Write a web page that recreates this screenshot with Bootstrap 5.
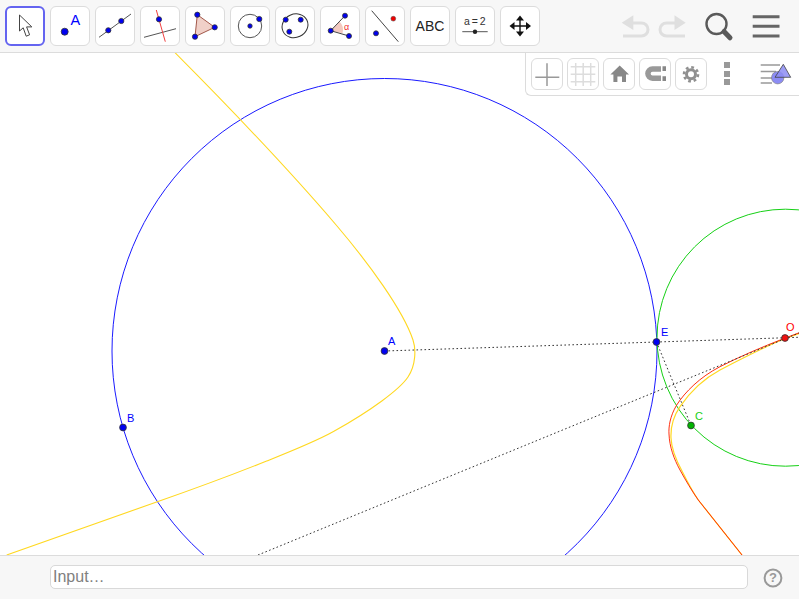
<!DOCTYPE html>
<html lang="en">
<head>
<meta charset="utf-8">
<title>Geometry</title>
<link href="https://cdn.jsdelivr.net/npm/bootstrap@5.3.0/dist/css/bootstrap.min.css" rel="stylesheet">
<style>
html,body{background:#fff;margin:0;overflow:hidden}
body{font-family:"Liberation Sans",Arial,sans-serif}
.app{width:799px;height:599px}
.topbar{height:53px;padding:6px 13px 0 5px;gap:5px;background:#f7f7f7;border-bottom:1px solid #dcdcdc;flex:none}
.tool{width:40px;height:40px;padding:0;background:#fff;border:1px solid #dcdcdc;border-radius:6px;color:#222;line-height:1;flex:none}
.tool.active{border:2px solid #6464f0}
.tool svg,.sbtn svg,.plain svg{display:block;width:100%;height:100%}
.tool.abc{font-size:14px}
.plain{padding:0;height:40px;border:0;background:none;flex:none}
.plain.w38{width:38px}
.plain.w40{width:40px}
.undo-group{margin-left:auto}
.redo-gap{margin-left:-5px}
.search-gap{margin-left:2px}
.menu-gap{margin-left:2px}
.canvas{height:502px;flex:none}
.canvas>svg{display:block}
.stylebar{top:0;right:0;width:274px;height:43px;padding:5px 0 0 5px;gap:4px;background:#fff;border:solid #dcdcdc;border-width:0 0 1px 1px;border-bottom-left-radius:6px}
.sbtn{width:32px;height:32px;padding:0;background:#fff;border:1px solid #dcdcdc;border-radius:6px;flex:none}
.dots{width:6px;height:24px;margin:4px 0 0 13px;gap:2.5px;flex:none}
.dots i{display:block;height:6px;background:#999}
.lastic{width:32px;height:32px;margin-left:26px;flex:none}
.lastic svg{display:block;width:100%;height:100%}
.inputbar{height:44px;padding:9px 0 0 50px;background:#f7f7f7;border-top:1px solid #dcdcdc;flex:none}
.inputbar .form-control{width:698px;height:24px;min-height:0;padding:0 2px;font-size:16px;line-height:22px;border:1px solid #d9d9d9;border-radius:5px;box-shadow:none;font-family:"Liberation Sans",Arial,sans-serif}
.inputbar .form-control::placeholder{color:#808080;opacity:1}
.help{width:20px;height:20px;margin:3px 0 0 15px;flex:none;display:block}
.pt{fill:#0000f0;stroke:#333;stroke-width:.8}
.lbl{font-family:"Liberation Sans",Arial,sans-serif;font-size:11px}
.dot{fill:none;stroke:#333;stroke-width:1;stroke-dasharray:1.6 2.4}
</style>
</head>
<body>
<div class="app d-flex flex-column">
  <div class="topbar d-flex align-items-start">
    <button class="tool active" type="button" aria-label="Move">
      <svg viewBox="7 8 36 36"><path d="M19.5 15V31L23.2 27.8 26.2 36.2 29.6 34.8 26.6 26.9H31.8Z" fill="#fff" stroke="#444" stroke-width="1"/></svg>
    </button>
    <button class="tool" type="button" aria-label="Point">
      <svg viewBox="51 7 38 38"><circle class="pt" cx="64.7" cy="31.7" r="3.5"/><text x="70.5" y="25.3" font-size="14.5" fill="#0000ff" font-family="Liberation Sans">A</text></svg>
    </button>
    <button class="tool" type="button" aria-label="Line">
      <svg viewBox="96 7 38 38"><path d="M99 37.3 131 14" stroke="#555" fill="none"/><circle class="pt" cx="108.3" cy="30.3" r="2.6"/><circle class="pt" cx="121.3" cy="21" r="2.6"/></svg>
    </button>
    <button class="tool" type="button" aria-label="Perpendicular">
      <svg viewBox="141 7 38 38"><path d="M144 37.3 176 28.7" stroke="#555" fill="none"/><path d="M156.3 10 165.3 41.7" stroke="#f04040" fill="none"/><circle class="pt" cx="159" cy="19.3" r="2.6"/></svg>
    </button>
    <button class="tool" type="button" aria-label="Polygon">
      <svg viewBox="186 7 38 38"><path d="M197.3 14.7 214.7 27.3 195 36.7Z" fill="#f0d0c8" stroke="#a2584a"/><circle class="pt" cx="197.3" cy="14.7" r="2.6"/><circle class="pt" cx="214.7" cy="27.3" r="2.6"/><circle class="pt" cx="195" cy="36.7" r="2.6"/></svg>
    </button>
    <button class="tool" type="button" aria-label="Circle">
      <svg viewBox="231 7 38 38"><circle cx="250" cy="26" r="11.7" fill="none" stroke="#555"/><circle class="pt" cx="250" cy="26" r="2.2"/><circle class="pt" cx="259.3" cy="19" r="2.6"/></svg>
    </button>
    <button class="tool" type="button" aria-label="Ellipse">
      <svg viewBox="276 7 38 38"><ellipse cx="295" cy="25.8" rx="13.2" ry="11.6" transform="rotate(-25 295 25.8)" fill="none" stroke="#333"/><circle class="pt" cx="285.7" cy="19.7" r="2.5"/><circle class="pt" cx="300.7" cy="19.7" r="2.5"/><circle class="pt" cx="289.3" cy="31.7" r="2.5"/></svg>
    </button>
    <button class="tool" type="button" aria-label="Angle">
      <svg viewBox="321 7 38 38"><path d="M330.7 30.7 339.5 21.6A12 12 0 0 1 342.5 33.2Z" fill="#f3c9c0" stroke="none"/><path d="M345 15.7 330.7 30.7 349 36" stroke="#444" fill="none"/><circle class="pt" cx="330.7" cy="30.7" r="2.5"/><circle class="pt" cx="345" cy="15.7" r="2.5"/><circle class="pt" cx="349" cy="36" r="2.5"/><text x="344" y="29.5" font-size="9" fill="#f03030" font-family="Liberation Sans">α</text></svg>
    </button>
    <button class="tool" type="button" aria-label="Reflect">
      <svg viewBox="366 7 38 38"><path d="M371.7 10.7 398.3 41.7" stroke="#444" fill="none"/><circle class="pt" cx="376" cy="33.3" r="2.5"/><circle cx="393.3" cy="18.7" r="2.4" fill="#f00000" stroke="#444" stroke-width=".5"/></svg>
    </button>
    <button class="tool abc" type="button">ABC</button>
    <button class="tool" type="button" aria-label="Slider">
      <svg viewBox="456 7 38 38"><text x="464" y="25" font-size="10.5" word-spacing="-1" fill="#333" font-family="Liberation Sans">a = 2</text><path d="M462.3 31.7H487.7" stroke="#555" fill="none"/><circle cx="475" cy="31.7" r="2.2" fill="#222"/></svg>
    </button>
    <button class="tool" type="button" aria-label="Move view">
      <svg viewBox="501 7 38 38"><path d="M520 18V34M512 26H528" stroke="#111" stroke-width="1.4" fill="none"/><path d="M520 15.5 524 20.5H516ZM520 36.5 516 31.5H524ZM509.5 26 514.5 22V30ZM531 26 526 30V22Z" fill="#111"/></svg>
    </button>
    <button class="plain w38 undo-group" type="button" aria-label="Undo">
      <svg viewBox="616 6 38 40"><path d="M633 23H641.5A6.5 6.5 0 0 1 641.5 36H623" fill="none" stroke="#dfdfdf" stroke-width="3"/><path d="M621.7 22.7 633.3 15.3V30Z" fill="#dfdfdf"/></svg>
    </button>
    <button class="plain w38 redo-gap" type="button" aria-label="Redo">
      <svg viewBox="654 6 38 40"><path d="M675 23H666.5A6.5 6.5 0 0 0 666.5 36H685" fill="none" stroke="#dfdfdf" stroke-width="3"/><path d="M685.7 22.7 674.5 15.3V30Z" fill="#dfdfdf"/></svg>
    </button>
    <button class="plain w40 search-gap" type="button" aria-label="Search">
      <svg viewBox="699 6 40 40"><circle cx="716.5" cy="24" r="10" fill="none" stroke="#5a5a5a" stroke-width="2.4"/><path d="M724 31.5 730 37.8" stroke="#5a5a5a" stroke-width="5" stroke-linecap="round"/></svg>
    </button>
    <button class="plain w40 menu-gap" type="button" aria-label="Menu">
      <svg viewBox="746 6 40 40"><path d="M752.7 16.7H779.5M752.7 26.3H779.5M752.7 36H779.5" stroke="#666" stroke-width="3" fill="none"/></svg>
    </button>
  </div>

  <div class="canvas position-relative overflow-hidden">
    <svg width="799" height="502" viewBox="0 53 799 502" role="img" aria-label="Construction">
      <circle cx="384.5" cy="351" r="272.5" fill="none" stroke="#1a1aff" stroke-width="1"/>
      <circle cx="785.5" cy="337.7" r="128.5" fill="none" stroke="#16d016" stroke-width="1"/>
      <path d="M175 52.7C230 108 285 165 337 226C368 262.4 403 310 413 340C416 349 416 365 408 377C400 389 372 410 333.5 431.5C315 441.8 293 450.5 266.7 461C240 471.7 200 486.8 158 501.5L6.7 555" fill="none" stroke="#ffd820" stroke-width="1.1"/>
      <path d="M799 333.5 784 339C762 348 741 359 720 370C705 378 690 392 680 406.7C674 415.5 670.5 427 671 438C671.5 449 676 460 682 471C687 481 692 491 698.3 500L742 555" fill="none" stroke="#ffd820" stroke-width="1.2"/>
      <path d="M799 332.8 784 338.5C762 347 740 356.5 720 366.7C700 377 685 392 676.7 405C670 416 668.5 427 669 434C669.5 447 674 459 680 470C686 481 692 491 698.3 500L742 555" fill="none" stroke="#ff3010" stroke-width="1"/>
      <path class="dot" d="M384.5 351 799 337.3"/>
      <path class="dot" d="M258 555 799 333"/>
      <path class="dot" d="M656.5 342 691 425.5"/>
      <circle class="pt" cx="384.5" cy="351" r="3.4"/>
      <circle class="pt" cx="123" cy="427.5" r="3.4"/>
      <circle class="pt" cx="656.5" cy="342" r="3.4"/>
      <circle cx="691" cy="425.5" r="3.4" fill="#00b400" stroke="#333" stroke-width=".8"/>
      <circle cx="785" cy="338" r="3.4" fill="#f01010" stroke="#333" stroke-width=".8"/>
      <text class="lbl" x="388" y="345" fill="#0000ff">A</text>
      <text class="lbl" x="127" y="422" fill="#0000ff">B</text>
      <text class="lbl" x="661" y="336" fill="#0000ff">E</text>
      <text class="lbl" x="695" y="420" fill="#16d016">C</text>
      <text class="lbl" x="786" y="331" fill="#ff0000">O</text>
    </svg>

    <div class="stylebar position-absolute d-flex align-items-start">
      <button class="sbtn" type="button" aria-label="Axes">
        <svg viewBox="532 59 30 30"><path d="M535.3 77.3H559.3M547 63.3V86" stroke="#999" stroke-width="1.5" fill="none"/></svg>
      </button>
      <button class="sbtn" type="button" aria-label="Grid">
        <svg viewBox="568 59 30 30"><path d="M575.7 63V86M583.2 63V86M590.7 63V86M570.7 66.8H595.3M570.7 74.3H595.3M570.7 81.8H595.3" stroke="#ddd" stroke-width="1.5" fill="none"/></svg>
      </button>
      <button class="sbtn" type="button" aria-label="Home">
        <svg viewBox="604 59 30 30"><path d="M619.7 65.5 629 74.5H626V82H622V76.5H617.4V82H613.4V74.5H610.4Z" fill="#888"/></svg>
      </button>
      <button class="sbtn" type="button" aria-label="Snap">
        <svg viewBox="640 59 30 30"><path d="M661 69H652.5A4.6 4.6 0 0 0 652.5 78.2H661" fill="none" stroke="#999" stroke-width="5.5"/><path d="M662.5 66.2H666V71H662.5ZM662.5 76.2H666V81H662.5Z" fill="#888"/></svg>
      </button>
      <button class="sbtn" type="button" aria-label="Settings">
        <svg viewBox="676 59 30 30"><circle cx="691" cy="74.3" r="4.5" fill="none" stroke="#909090" stroke-width="3"/><circle cx="691" cy="74.3" r="7" fill="none" stroke="#909090" stroke-width="2.6" stroke-dasharray="2.75 2.75"/></svg>
      </button>
      <div class="dots d-flex flex-column"><i></i><i></i><i></i></div>
      <div class="lastic">
        <svg viewBox="760 58 32 32"><path d="M760.7 65H780M760.7 71.5H776M760.7 78H772M760.7 83H772" stroke="#999" stroke-width="1.6" fill="none"/><circle cx="777.7" cy="77.7" r="6.2" fill="#8c8cf4" stroke="#777" stroke-width=".6"/><path d="M783.3 64.3 790.7 77.3H775Z" fill="#8c8cf4" fill-opacity=".85" stroke="#444" stroke-width=".8"/></svg>
      </div>
    </div>
  </div>

  <div class="inputbar d-flex align-items-start">
    <input class="form-control" type="text" placeholder="Input…" aria-label="Input">
    <svg class="help" viewBox="0 0 20 20" role="img" aria-label="Help"><circle cx="10" cy="10" r="8.4" fill="none" stroke="#999" stroke-width="2"/><text x="10" y="14.4" text-anchor="middle" font-size="13" font-weight="700" fill="#999" font-family="Liberation Sans">?</text></svg>
  </div>
</div>
<script src="https://cdn.jsdelivr.net/npm/bootstrap@5.3.0/dist/js/bootstrap.bundle.min.js"></script>
</body>
</html>
